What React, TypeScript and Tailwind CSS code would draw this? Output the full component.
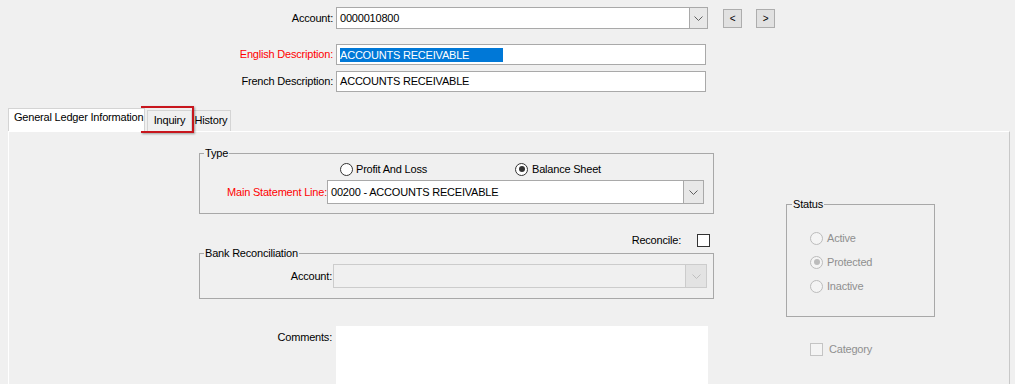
import React from "react";

function Chevron({ color = "#606060" }: { color?: string }) {
  return (
    <svg width="9" height="5" viewBox="0 0 9 5">
      <path d="M0.5 0.5 L4.5 4.5 L8.5 0.5" fill="none" stroke={color} strokeWidth="1" />
    </svg>
  );
}

function Radio({ checked, disabled }: { checked?: boolean; disabled?: boolean }) {
  const border = disabled ? "border-[#bcbcbc] bg-[#f4f4f4]" : "border-[#333333] bg-white";
  const dot = disabled ? "bg-[#bcbcbc]" : "bg-[#333333]";
  return (
    <span className={`flex h-[13px] w-[13px] shrink-0 items-center justify-center rounded-full border ${border}`}>
      {checked && <span className={`h-[6px] w-[6px] rounded-full ${dot}`} />}
    </span>
  );
}

export default function App() {
  return (
    <div className="h-[384px] w-[1015px] overflow-hidden bg-[#f0f0f0] font-['Liberation_Sans',Arial,sans-serif] text-[11px] tracking-[-0.2px] text-black">
      {/* Header fields */}
      <div className="pt-[7px]">
        <div className="flex h-[22px] items-center">
          <div className="w-[336px] pr-[3px] text-right">Account:</div>
          <div className="flex h-[22px] w-[372px] border border-[#a9a9a9] bg-white">
            <div className="flex flex-1 items-center pl-[3px]">0000010800</div>
            <div className="flex w-[18px] items-center justify-center border-l border-[#a9a9a9] bg-[#e8e8e8]">
              <Chevron />
            </div>
          </div>
          <button className="ml-[15px] flex h-[19px] w-[19px] items-center justify-center border border-[#adadad] bg-[#e1e1e1] text-[10px]">
            &lt;
          </button>
          <button className="ml-[14px] flex h-[19px] w-[19px] items-center justify-center border border-[#adadad] bg-[#e1e1e1] text-[10px]">
            &gt;
          </button>
        </div>

        <div className="mt-[15px] flex h-[21px] items-center">
          <div className="w-[336px] pr-[3px] text-right text-[#ff0000]">English Description:</div>
          <div className="flex h-[21px] w-[370px] items-center border border-[#a9a9a9] bg-white pl-[3px]">
            <span className="inline-block h-[14px] w-[163px] bg-[#0078d7] leading-[14px] text-white">
              ACCOUNTS RECEIVABLE
            </span>
          </div>
        </div>

        <div className="mt-[6px] flex h-[21px] items-center">
          <div className="w-[336px] pr-[3px] text-right">French Description:</div>
          <div className="flex h-[21px] w-[370px] items-center border border-[#a9a9a9] bg-white pl-[3px]">
            ACCOUNTS RECEIVABLE
          </div>
        </div>
      </div>

      {/* Tabs */}
      <div className="relative mt-[16px] flex h-[23px] items-end pl-[8px]">
        <div className="relative z-10 flex h-[23px] w-[137px] items-start border border-b-0 border-[#d4d4d4] bg-white pl-[5px]">
          General Ledger Information
        </div>
        <div className="ml-[2px] flex h-[21px] w-[45px] items-start justify-center border border-b-0 border-[#d4d4d4] bg-[#f0f0f0] pt-[1px]">
          Inquiry
        </div>
        <div className="flex h-[21px] w-[39px] items-start justify-center border border-b-0 border-l-0 border-[#d4d4d4] bg-[#f0f0f0] pt-[1px]">
          History
        </div>
        <div className="absolute left-[141px] top-[-2px] h-[27px] w-[53px] border-2 border-[#c8161d] shadow-[1px_1px_2px_rgba(0,0,0,0.35)]" />
      </div>

      {/* Tab panel */}
      <div className="ml-[8px] flex h-[260px] w-[1002px] items-start border-l border-t border-r border-l-white border-t-white border-r-[#c8c8c8]">
        {/* Left column */}
        <div className="ml-[190px] mt-[15px] w-[515px]">
          <fieldset className="border border-[#a8a8a8] pb-[9px]">
            <legend className="ml-[4px] px-[1px] leading-[13px]">Type</legend>
            <div className="mt-[2px] flex h-[14px] items-center pl-[140px]">
              <div className="flex w-[175px] items-center gap-[3px]">
                <Radio />
                <span>Profit And Loss</span>
              </div>
              <div className="flex items-center gap-[4px]">
                <Radio checked />
                <span>Balance Sheet</span>
              </div>
            </div>
            <div className="mt-[4px] flex items-center">
              <div className="w-[127px] text-right text-[#ff0000]">Main Statement Line:</div>
              <div className="flex h-[24px] w-[377px] border border-[#a9a9a9] bg-white">
                <div className="flex flex-1 items-center pl-[3px]">00200 - ACCOUNTS RECEIVABLE</div>
                <div className="flex w-[20px] items-center justify-center border-l border-[#a9a9a9] bg-[#e8e8e8]">
                  <Chevron />
                </div>
              </div>
            </div>
          </fieldset>

          <div className="mt-[20px] flex h-[13px] items-center justify-end pr-[4px]">
            <span>Reconcile:</span>
            <span className="ml-[16px] h-[13px] w-[13px] border border-[#333333] bg-white" />
          </div>

          <fieldset className="border border-[#a8a8a8] pb-[10px]">
            <legend className="ml-[4px] px-[1px] leading-[13px]">Bank Reconciliation</legend>
            <div className="mt-[4px] flex items-center">
              <div className="w-[132px] text-right">Account:</div>
              <div className="ml-[1px] flex h-[24px] w-[374px] border border-[#cccccc] bg-[#f0f0f0]">
                <div className="flex-1" />
                <div className="flex w-[21px] items-center justify-center border-l border-[#cccccc] bg-[#e3e3e3]">
                  <Chevron color="#bfbfbf" />
                </div>
              </div>
            </div>
          </fieldset>

          <div className="mt-[27px] flex items-start">
            <div className="w-[133px] pt-[3px] text-right">Comments:</div>
            <div className="ml-[4px] h-[60px] w-[372px] bg-white" />
          </div>
        </div>

        {/* Right column */}
        <div className="ml-[72px] mt-[66px] w-[149px]">
          <fieldset className="border border-[#a8a8a8] pb-[23px] text-[#8f8f8f]">
            <legend className="ml-[5px] px-[1px] leading-[13px] text-black">Status</legend>
            <div className="mt-[20px] flex flex-col gap-[10px] pl-[23px]">
              <div className="flex h-[14px] items-center gap-[4px]">
                <Radio disabled />
                <span>Active</span>
              </div>
              <div className="flex h-[14px] items-center gap-[4px]">
                <Radio disabled checked />
                <span>Protected</span>
              </div>
              <div className="flex h-[14px] items-center gap-[4px]">
                <Radio disabled />
                <span>Inactive</span>
              </div>
            </div>
          </fieldset>
          <div className="mt-[26px] flex h-[13px] items-center gap-[6px] pl-[24px] text-[#8f8f8f]">
            <span className="h-[13px] w-[13px] border border-[#c4c4c4] bg-[#f4f4f4]" />
            <span>Category</span>
          </div>
        </div>
      </div>
    </div>
  );
}
